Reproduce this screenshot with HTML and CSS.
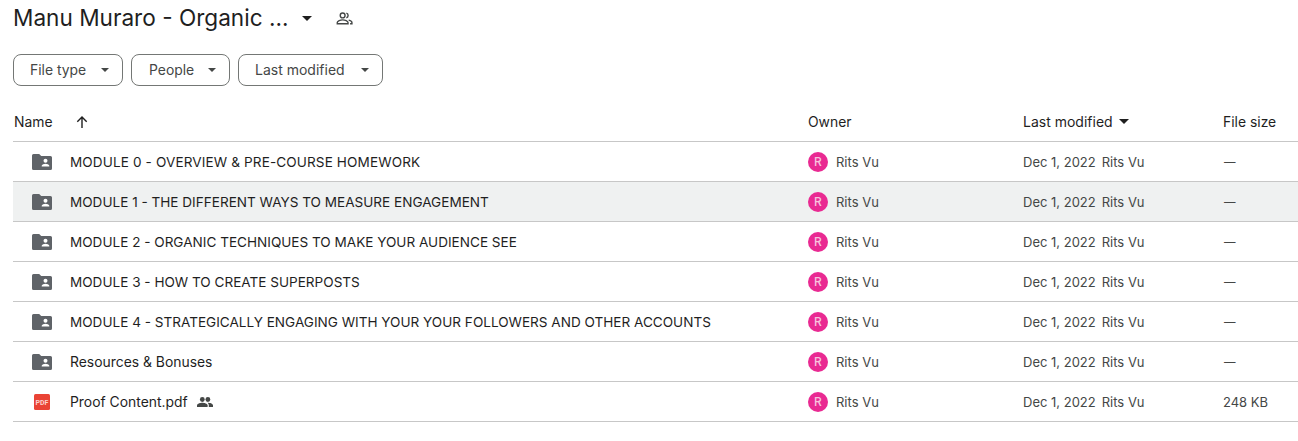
FILE: index.html
```html
<!DOCTYPE html>
<html lang="en">
<head>
<meta charset="utf-8">
<title>Manu Muraro - Organic ...</title>
<link rel="stylesheet" href="styles.css">
</head>
<body>
<svg width="0" height="0" class="defs">
  <symbol id="shared-folder" viewBox="0 0 20 16">
    <path fill="#5f6368" d="M1.5 0h5.7l2 2h9.3A1.5 1.5 0 0 1 20 3.500v11a1.500 1.500 0 0 1-1.500 1.500h-17A1.500 1.500 0 0 1 0 14.500v-13A1.500 1.500 0 0 1 1.500 0z"/>
    <circle fill="#fff" cx="13.500" cy="6.800" r="2"/>
    <path fill="#fff" d="M9.700 12.500v-.8c0-1.300 2.500-2 3.800-2s3.800.7 3.800 2v.8z"/>
  </symbol>
  <symbol id="people" viewBox="0 0 16 10">
    <circle cx="5.300" cy="2.500" r="2.400"/>
    <circle cx="10.900" cy="2.500" r="2.400"/>
    <path d="M0 10V8.300C0 6.500 3.400 5.700 5.300 5.700s5.300.8 5.300 2.600V10z"/>
    <path d="M11.800 10V8.300c0-1-.5-1.800-1.300-2.500 2.200 0 5.500.8 5.500 2.500V10z"/>
  </symbol>
  <symbol id="caret" viewBox="0 0 10 5"><path d="M0 0h10L5 5z"/></symbol>
</svg>

<header class="title-row">
  <h1 class="title">Manu Muraro - Organic ...</h1>
  <svg class="title-caret"><use href="#caret"/></svg>
  <svg class="title-share" viewBox="0 0 18 14" fill="none" stroke="#444746" stroke-width="1.500">
    <circle cx="7" cy="3.700" r="2.600"/>
    <path d="M11 1.200a2.600 2.600 0 0 1 0 5"/>
    <path d="M1.200 12.700v-1.300c0-1.700 3.400-2.900 5.800-2.900s5.800 1.200 5.800 2.900v1.300z"/>
    <path d="M13.500 8.700c1.900.4 3.500 1.300 3.500 2.700v1.300h-2"/>
  </svg>
</header>

<div class="filters">
  <button class="chip chip-type">File type<svg class="chip-caret"><use href="#caret"/></svg></button>
  <button class="chip chip-people">People<svg class="chip-caret"><use href="#caret"/></svg></button>
  <button class="chip chip-modified">Last modified<svg class="chip-caret"><use href="#caret"/></svg></button>
</div>

<main class="table">
  <div class="row head">
    <div class="name-head">Name
      <svg class="sort-arrow" viewBox="0 0 12 12" fill="none" stroke="#1f1f1f" stroke-width="1.400"><path d="M6 12V1.200M1.300 5.800 6 1.100l4.700 4.700"/></svg>
    </div>
    <div>Owner</div>
    <div class="mod-head">Last modified<svg class="mod-caret"><use href="#caret"/></svg></div>
    <div>File size</div>
  </div>

  <div class="row item">
    <div class="name name-wide"><svg class="folder"><use href="#shared-folder"/></svg>MODULE 0 - OVERVIEW &amp; PRE-COURSE HOMEWORK</div>
    <div class="owner"><span class="avatar">R</span>Rits Vu</div>
    <div class="modified"><span>Dec 1, 2022</span><span>Rits Vu</span></div>
    <div class="size none">—</div>
  </div>
  <div class="row item selected">
    <div class="name"><svg class="folder"><use href="#shared-folder"/></svg>MODULE 1 - THE DIFFERENT WAYS TO MEASURE ENGAGEMENT</div>
    <div class="owner"><span class="avatar">R</span>Rits Vu</div>
    <div class="modified"><span>Dec 1, 2022</span><span>Rits Vu</span></div>
    <div class="size none">—</div>
  </div>
  <div class="row item">
    <div class="name"><svg class="folder"><use href="#shared-folder"/></svg>MODULE 2 - ORGANIC TECHNIQUES TO MAKE YOUR AUDIENCE SEE</div>
    <div class="owner"><span class="avatar">R</span>Rits Vu</div>
    <div class="modified"><span>Dec 1, 2022</span><span>Rits Vu</span></div>
    <div class="size none">—</div>
  </div>
  <div class="row item">
    <div class="name"><svg class="folder"><use href="#shared-folder"/></svg>MODULE 3 - HOW TO CREATE SUPERPOSTS</div>
    <div class="owner"><span class="avatar">R</span>Rits Vu</div>
    <div class="modified"><span>Dec 1, 2022</span><span>Rits Vu</span></div>
    <div class="size none">—</div>
  </div>
  <div class="row item">
    <div class="name"><svg class="folder"><use href="#shared-folder"/></svg>MODULE 4 - STRATEGICALLY ENGAGING WITH YOUR YOUR FOLLOWERS AND OTHER ACCOUNTS</div>
    <div class="owner"><span class="avatar">R</span>Rits Vu</div>
    <div class="modified"><span>Dec 1, 2022</span><span>Rits Vu</span></div>
    <div class="size none">—</div>
  </div>
  <div class="row item">
    <div class="name name-mixed"><svg class="folder"><use href="#shared-folder"/></svg>Resources &amp; Bonuses</div>
    <div class="owner"><span class="avatar">R</span>Rits Vu</div>
    <div class="modified"><span>Dec 1, 2022</span><span>Rits Vu</span></div>
    <div class="size none">—</div>
  </div>
  <div class="row item">
    <div class="name name-mixed"><svg class="pdf" viewBox="0 0 16 16"><rect width="16" height="16" rx="1.500" fill="#ea4335"/><text x="8" y="10.600" class="pdf-label">PDF</text></svg>Proof Content.pdf<svg class="shared"><use href="#people"/></svg></div>
    <div class="owner"><span class="avatar">R</span>Rits Vu</div>
    <div class="modified"><span>Dec 1, 2022</span><span>Rits Vu</span></div>
    <div class="size">248 KB</div>
  </div>
</main>
</body>
</html>
```
FILE: styles.css
```css
* { box-sizing: border-box; }
html, body { margin: 0; padding: 0; background: #fff; }
body {
  font-family: Inter, Roboto, "Noto Sans", Arial, sans-serif;
  color: #1f1f1f;
  height: 441px;
  overflow: hidden;
}
.defs { display: block; height: 0; }

.title-row {
  display: flex;
  align-items: center;
  height: 36px;
  padding-left: 13px;
}
.title {
  margin: 0;
  font-size: 22.600px;
  font-weight: 400;
  line-height: 36px;
  width: 288px;
  white-space: nowrap;
}
.title-caret { width: 10px; height: 5px; fill: #1f1f1f; margin-left: 1px; }
.title-share { width: 17px; height: 13px; margin-left: 24px; }

.filters {
  display: flex;
  gap: 8px;
  padding: 18px 0 0 13px;
}
.chip {
  display: flex;
  align-items: center;
  height: 32px;
  border: 1px solid #747775;
  border-radius: 8px;
  background: #fff;
  color: #444746;
  font: 400 13.900px/20px Inter, Roboto, "Noto Sans", Arial, sans-serif;
  padding: 0 0 0 16px;
}
.chip-type { width: 110px; }
.chip-people { width: 99px; padding-left: 17px; }
.chip-modified { width: 145px; font-size: 14px; }
.chip-caret { width: 8px; height: 4px; fill: #444746; margin-left: auto; margin-right: 13px; }

.table { padding: 16px 0 0 13px; }
.row {
  display: grid;
  grid-template-columns: 794px 215px 200px 1fr;
  align-items: center;
  border-bottom: 1px solid #c7c7c7;
  font-size: 13px;
}
.head { height: 40px; padding-left: 1px; font-size: 13.900px; color: #1f1f1f; }
.item { height: 40px; padding-left: 1px; }
.selected { background: #eff1f1; }

.name-head { display: flex; align-items: center; }
.sort-arrow { width: 12px; height: 12px; margin-left: 23px; }
.mod-head { display: flex; align-items: center; font-size: 14px; }
.mod-caret { width: 10px; height: 5px; fill: #1f1f1f; margin-left: 6px; }

.name { display: flex; align-items: center; white-space: nowrap; color: #1f1f1f; font-size: 13.570px; }
.name-wide { letter-spacing: .12px; }
.name-mixed { font-size: 13.900px; }
.folder { width: 20px; height: 16px; margin: 0 18px 0 18px; flex: none; }
.pdf { width: 16px; height: 16px; margin: 0 20px; flex: none; }
.pdf-label { font: 700 7px Roboto, Arial, sans-serif; fill: #fbd3d0; text-anchor: middle; }
.shared { width: 16px; height: 10px; fill: #444746; margin-left: 9px; }

.owner { display: flex; align-items: center; color: #444746; }
.avatar {
  display: flex;
  align-items: center;
  justify-content: center;
  width: 20px;
  height: 20px;
  border-radius: 50%;
  background: #e92a92;
  color: #f8c4df;
  font-size: 12px;
  font-weight: 500;
  margin-right: 8px;
  flex: none;
}
.modified { display: flex; gap: 6px; color: #444746; white-space: nowrap; }
.size { color: #444746; }
.none { font-size: 11.500px; padding-left: 1px; }
```
